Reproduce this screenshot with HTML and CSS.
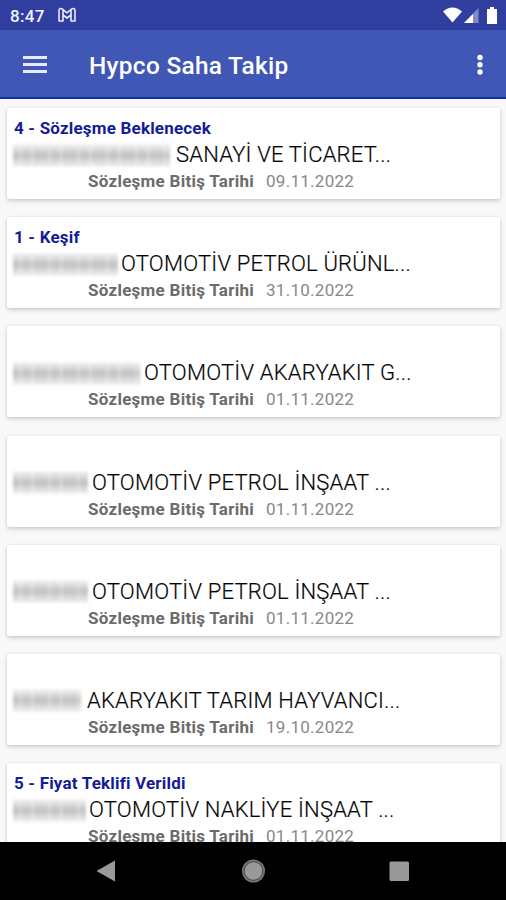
FILE: index.html
```html
<!DOCTYPE html>
<html lang="tr">
<head>
<meta charset="utf-8">
<title>Hypco Saha Takip</title>
<link rel="stylesheet" href="styles.css">
</head>
<body>
<div class="status">
  <span class="clock">8:47</span>
  <svg class="mail" width="20" height="16" viewBox="0 0 20 16" fill="none" stroke="#e8eaff" stroke-width="1.6" stroke-linejoin="round"><path d="M2 14V3.500C2 1.200 4 1 5.500 2.200L10 5.800L14.500 2.200C16 1 18 1.200 18 3.500V14H14V8L10 11L6 8V14Z"/><path d="M6 3V8M14 3V8"/></svg>
  <svg class="signals" width="56" height="20" viewBox="0 0 56 20" fill="#fff"><path d="M0 5.500Q9.500-2.500 19 5.500L9.500 16.500Z"/><path d="M21 17L35.500 2V17Z" opacity=".4"/><path d="M21 17L30 8V17Z"/><path d="M44 3H47V1H51V3H54V18H44Z"/></svg>
</div>
<header class="bar">
  <svg class="menu" width="24" height="18" viewBox="0 0 24 18" fill="#e6ebff"><path d="M0 0H24V3H0ZM0 7H24V10H0ZM0 14H24V17H0Z"/></svg>
  <h1>Hypco Saha Takip</h1>
  <svg class="more" width="6" height="22" viewBox="0 0 6 22" fill="#fff"><circle cx="3" cy="3.500" r="2.700"/><circle cx="3" cy="10.800" r="2.700"/><circle cx="3" cy="18" r="2.700"/></svg>
</header>
<main class="list">
  <article class="card"><p class="stage">4 - Sözleşme Beklenecek</p><div class="name"><i class="smear w1"></i><span>SANAYİ VE TİCARET...</span></div><p class="due"><b>Sözleşme Bitiş Tarihi</b><span>09.11.2022</span></p></article>
  <article class="card"><p class="stage">1 - Keşif</p><div class="name"><i class="smear w2"></i><span>OTOMOTİV PETROL ÜRÜNL...</span></div><p class="due"><b>Sözleşme Bitiş Tarihi</b><span>31.10.2022</span></p></article>
  <article class="card"><p class="stage"></p><div class="name"><i class="smear w3"></i><span>OTOMOTİV AKARYAKIT G...</span></div><p class="due"><b>Sözleşme Bitiş Tarihi</b><span>01.11.2022</span></p></article>
  <article class="card"><p class="stage"></p><div class="name"><i class="smear w4"></i><span>OTOMOTİV PETROL İNŞAAT ...</span></div><p class="due"><b>Sözleşme Bitiş Tarihi</b><span>01.11.2022</span></p></article>
  <article class="card"><p class="stage"></p><div class="name"><i class="smear w4"></i><span>OTOMOTİV PETROL İNŞAAT ...</span></div><p class="due"><b>Sözleşme Bitiş Tarihi</b><span>01.11.2022</span></p></article>
  <article class="card"><p class="stage"></p><div class="name"><i class="smear w6"></i><span>AKARYAKIT TARIM HAYVANCI...</span></div><p class="due"><b>Sözleşme Bitiş Tarihi</b><span>19.10.2022</span></p></article>
  <article class="card"><p class="stage">5 - Fiyat Teklifi Verildi</p><div class="name"><i class="smear w7"></i><span>OTOMOTİV NAKLİYE İNŞAAT ...</span></div><p class="due"><b>Sözleşme Bitiş Tarihi</b><span>01.11.2022</span></p></article>
</main>
<nav class="nav">
  <svg width="506" height="58" viewBox="0 0 506 58" fill="#999"><path d="M96.500 29L115 18.500V39.500Z"/><circle cx="253.500" cy="29" r="11.500" fill="#777"/><circle cx="253.500" cy="29" r="9.300" stroke="#333" stroke-width=".8"/><rect x="389.500" y="19.500" width="19.500" height="19.500" rx="1.500"/></svg>
</nav>
</body>
</html>
```
FILE: styles.css
```css
* { box-sizing: border-box; }
body {
  margin: 0;
  width: 506px;
  height: 900px;
  display: flex;
  flex-direction: column;
  overflow: hidden;
  background: #f8f8f8;
  font-family: Roboto, sans-serif;
}
p, h1 { margin: 0; }
.status {
  height: 30px;
  flex: none;
  display: flex;
  align-items: center;
  padding: 0 7px 0 10px;
  background: #303f9f;
  color: #f0f2ff;
}
.clock { padding-top: 1px; font-size: 17px; font-weight: 500; letter-spacing: 0.3px; width: 47px; }
.signals { margin-left: auto; margin-top: 1px; }
.bar {
  height: 69px;
  flex: none;
  display: flex;
  align-items: center;
  padding: 1px 23px 0;
  background: #4057b5;
  border-bottom: 2px solid #0b33a4;
  color: #fff;
}
.menu { margin-top: 2px; }
.bar h1 { margin-left: 42px; padding-top: 3px; font-size: 24.4px; font-weight: 500; line-height: 30px; letter-spacing: 0.3px; }
.more { margin-left: auto; margin-top: 2px; }
.list {
  flex: 1;
  min-height: 0;
  overflow: hidden;
  display: flex;
  flex-direction: column;
  gap: 18.2px;
  padding: 9px 6px 0 7px;
}
.card {
  flex: none;
  height: 91px;
  padding: 9px 7px 0;
  background: #fff;
  border-radius: 2px;
  box-shadow: 0 2px 4px rgba(0, 0, 0, 0.16), 0 0 3px rgba(0, 0, 0, 0.08);
}
.stage { height: 23px; line-height: 22px; font-size: 17px; font-weight: 700; letter-spacing: 0.19px; color: #141c96; }
.name { display: flex; align-items: center; height: 30px; line-height: 30px; font-size: 22px; font-weight: 300; letter-spacing: 0.2px; color: #000; white-space: pre; }
.name span { -webkit-text-stroke: 0.2px #222; }
.due { display: flex; gap: 12px; padding-left: 74px; height: 22px; line-height: 22px; font-size: 17px; letter-spacing: 0.27px; color: #888; }
.due b { font-weight: 700; color: #6b6b6b; }
.smear {
  flex: none;
  height: 23px;
  margin-left: -1px;
  filter: blur(1.5px);
  background:
    repeating-linear-gradient(90deg, transparent 0 5px, rgba(255, 255, 255, 0.25) 7px 8px, transparent 10px 17px, rgba(255, 255, 255, 0.35) 19px, transparent 22px 29px),
    linear-gradient(180deg, #f4f4f4, #c4c4c4 45%, #c4c4c4 55%, #f2f2f2);
}
.w1 { width: 157px; margin-right: 6px; }
.w2 { width: 105px; margin-right: 3px; }
.w3 { width: 127px; margin-right: 4px; }
.w4 { width: 75px; margin-right: 4px; }
.w6 { width: 68px; margin-right: 6px; }
.w7 { width: 73px; margin-right: 3px; }
.nav { flex: none; height: 58px; background: #000; }
.nav svg { display: block; }
```
